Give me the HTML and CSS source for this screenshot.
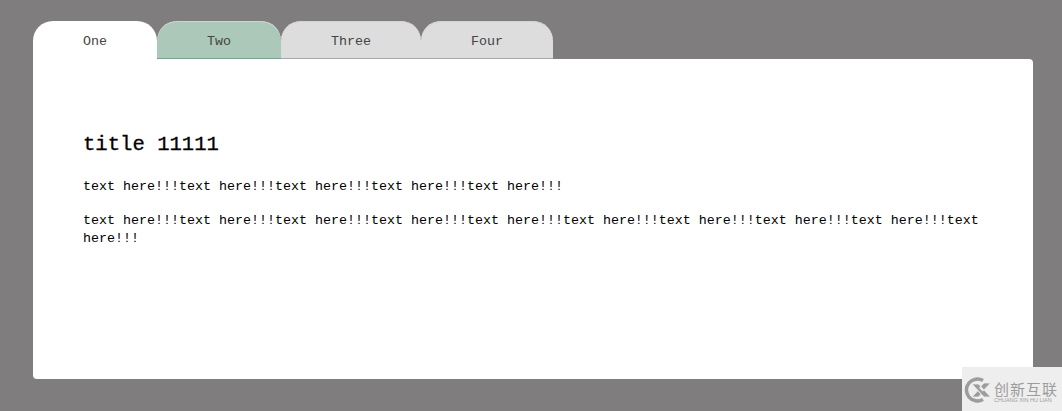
FILE: index.html
```html
<!DOCTYPE html>
<html lang="en">
<head>
  <meta charset="UTF-8">
  <title>Tabs</title>
  <link rel="stylesheet" href="styles.css">
</head>
<body>
  <div class="wrap">
    <ul class="tabs">
      <li class="tab active">One</li>
      <li class="tab green">Two</li>
      <li class="tab">Three</li>
      <li class="tab">Four</li>
    </ul>
    <div class="panel">
      <h2>title 11111</h2>
      <p>text here!!!text here!!!text here!!!text here!!!text here!!!</p>
      <p>text here!!!text here!!!text here!!!text here!!!text here!!!text here!!!text here!!!text here!!!text here!!!text here!!!</p>
    </div>
  </div>
  <div class="mark">
    <svg width="27" height="26" viewBox="0 0 27 26">
      <path d="M19 3.5A11 11 0 1 0 19 22.500" fill="none" stroke="#9c9c9c" stroke-width="3.500"/>
      <path d="M8 7h6.500l12 13h-6.500zM26.500 6h-6.500l-4.500 4.800 3.200 3.400zM8 20h6.500l2.500-2.800-3.200-3.400z" fill="#9c9c9c" stroke="#eee" stroke-width="0.800"/>
    </svg>
    <div class="mark-text">
      <span class="mark-cn">创新互联</span>
      <span class="mark-en">CHUANG XIN HU LIAN</span>
    </div>
  </div>
</body>
</html>
```

FILE: styles.css
```css
* {
  margin: 0;
  padding: 0;
}
html, body {
  height: 100%;
}
body {
  background-color: #807d7e;
  font-family: "Liberation Mono", monospace;
  overflow: hidden;
}
.wrap {
  width: 1000px;
  padding: 21px 0 0 33px;
}
.tabs {
  display: flex;
  list-style: none;
  height: 38px;
}
.tab {
  padding: 0 50px;
  height: 37px;
  line-height: 41px;
  font-size: 13.33px;
  color: #444;
  background-color: #ddd;
  border-bottom: 1px solid #aaa;
  border-radius: 20px 20px 0 0;
  box-shadow: inset 0 1px 0 #d2d2d2;
}
.tab.green {
  background-color: #abc8b8;
  border-bottom-color: #7f9f90;
}
.tab.active {
  background-color: #fff;
  border-bottom-color: #fff;
  box-shadow: none;
}
.panel {
  height: 320px;
  box-sizing: border-box;
  padding: 74px 50px 0;
  background-color: #fff;
  border-radius: 0 4px 4px 4px;
  color: #000;
}
.panel h2 {
  font-size: 20.6px;
  line-height: 24px;
  font-weight: normal;
  -webkit-text-stroke: 0.3px #000;
  margin-bottom: 21px;
}
.panel p {
  font-size: 13.33px;
  line-height: 18px;
  margin-bottom: 16px;
}
.mark {
  position: absolute;
  right: 0;
  bottom: 0;
  width: 100px;
  height: 44px;
  box-sizing: border-box;
  padding: 10px 0 0 2px;
  display: flex;
  gap: 3px;
  background-color: #eee;
}
.mark-text {
  display: flex;
  flex-direction: column;
  margin-top: 4px;
  color: #9c9c9c;
  font-family: "Noto Sans CJK SC", sans-serif;
}
.mark-cn {
  font-size: 15px;
  line-height: 15px;
  letter-spacing: 1px;
}
.mark-en {
  font-family: "Liberation Sans", sans-serif;
  font-size: 5.5px;
  line-height: 8px;
  white-space: nowrap;
}
```
